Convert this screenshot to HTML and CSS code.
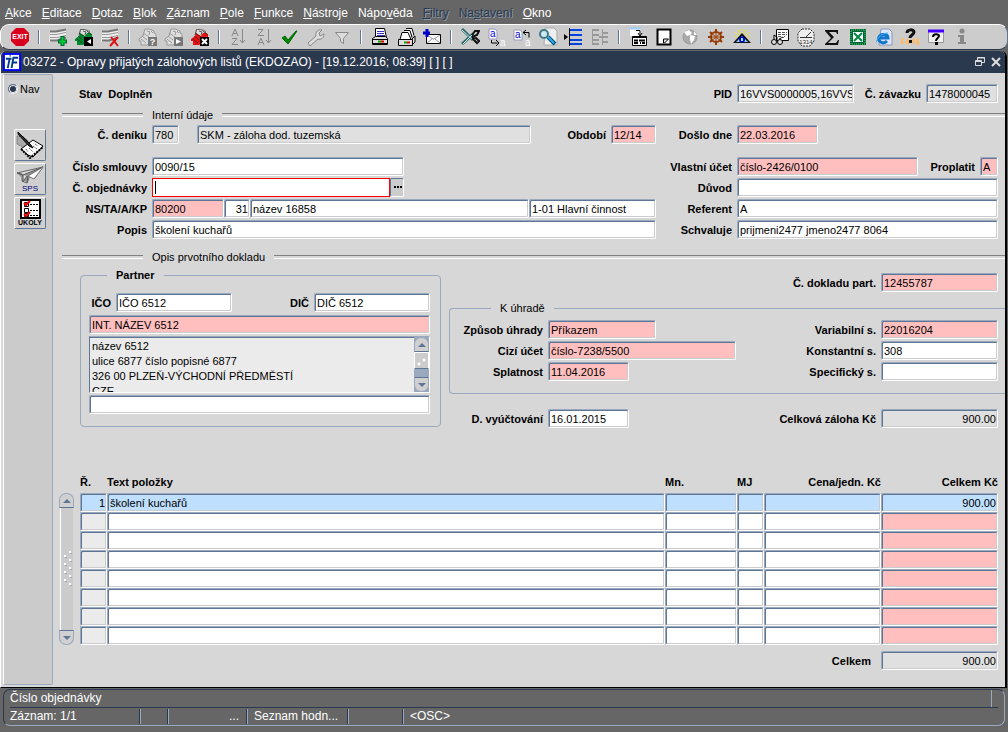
FILE: index.html
```html
<!DOCTYPE html>
<html lang="cs">
  <head>
    <meta charset="UTF-8" />
    <meta name="viewport" content="width=device-width, initial-scale=1.0" />
    <title>03272 - Opravy přijatých zálohových listů</title>
    <link rel="stylesheet" href="styles.css">
  </head>
  <body>
    <svg class="sprite" width="0" height="0" aria-hidden="true">
      <symbol id="rolodex" viewBox="0 0 20 20">
        <path d="M7 2h4l5 2v2l2 1v4l-3 4-6 3H3v-4H1v-2l4-3z" fill="currentColor" />
        <path d="M7 2h4l5 2v2h-3l-2 3-5-3z" fill="#ddd" />
        <path d="M6.500 2.500h4l5 2v2l2 1M4 9l5 4M3 12l5 4M6.500 2.500L5 8M5 6l6 4" stroke="#222" stroke-opacity=".65" fill="none" />
        <path d="M9 4l3 1-1 3M13 4l2 2" stroke="#555" fill="none" />
      </symbol>
      <symbol id="rolodex-off" viewBox="0 0 20 20">
        <path d="M7 2h4l5 2v2l2 1v4l-3 4-6 3H3v-4H1v-2l4-3z" fill="#ddd" stroke="#999" />
        <path d="M4 9l5 4M3 12l5 4M5 6l6 4M9 4l3 1-1 3M13 4l2 2" stroke="#999" fill="none" />
      </symbol>
      <symbol id="rows" viewBox="0 0 20 20">
        <path d="M2 4h7l9-2v10l-6 1-11 2z" fill="#eee" />
        <path d="M2 4.500h6l10-2M2 13.500h7l9-3" stroke="#777" stroke-width="2" fill="none" />
        <path d="M2 7.500h6l10-2M2 10.500h7l9-2" stroke="#999" fill="none" />
      </symbol>
      <symbol id="printer" viewBox="0 0 20 20">
        <path d="M5.500 1.500h9l2 9h-11z" fill="#fff" stroke="#000" />
        <path d="M7 4.500h7M7 6.500h7M7 8.500h8" stroke="#33c" />
        <path d="M2.500 11.500l3-2h10l2 2v6h-15z" fill="#ddd" stroke="#000" />
        <path d="M3 12.500h14M3 16.500h14" stroke="#000" />
        <path d="M8 14.500h3" stroke="#0a0" stroke-width="2" /><path d="M11 14.500h3" stroke="#e00" stroke-width="2" />
      </symbol>
    </svg>

    <nav class="menubar">
      <button type="button"><u>A</u>kce</button>
      <button type="button"><u>E</u>ditace</button>
      <button type="button"><u>D</u>otaz</button>
      <button type="button"><u>B</u>lok</button>
      <button type="button"><u>Z</u>áznam</button>
      <button type="button"><u>P</u>ole</button>
      <button type="button"><u>F</u>unkce</button>
      <button type="button"><u>N</u>ástroje</button>
      <button type="button">Nápo<u>v</u>ěda</button>
      <button type="button" disabled><u>F</u>iltry</button>
      <button type="button" disabled>Na<u>s</u>tavení</button>
      <button type="button"><u>O</u>kno</button>
    </nav>

    <div class="toolbar">
      <button type="button" aria-label="Konec"><svg viewBox="0 0 20 20"><path d="M6 1h8l5 5v8l-5 5H6l-5-5V6z" fill="#d8001c" /><text x="10" y="12" text-anchor="middle" font-size="7" font-weight="bold" fill="#fff">EXIT</text></svg></button>
      <i></i>
      <button type="button" aria-label="Vložit řádek"><svg viewBox="0 0 20 20"><use href="#rows" /><path d="M14.500 9v10M10 14.500h9" stroke="#063" stroke-width="4" /><path d="M14.500 10v8M11 14.500h7" stroke="#0c3" stroke-width="2" /></svg></button>
      <button type="button" aria-label="Uložit"><svg viewBox="0 0 20 20" color="#008a2e"><use href="#rolodex" /><path d="M10 10h9v9h-9z" /><path d="M17 12v5l-4-2.500z" fill="#fff" /></svg></button>
      <button type="button" aria-label="Smazat řádek"><svg viewBox="0 0 20 20"><use href="#rows" /><path d="M11 10l7 9M18 10l-8 9" stroke="#e01010" stroke-width="2" /></svg></button>
      <i></i>
      <button type="button" aria-label="Zadat dotaz"><svg viewBox="0 0 20 20"><use href="#rolodex-off" /><path d="M10 10h9v9h-9z" fill="#777" /><text x="14.500" y="18" text-anchor="middle" font-size="9" font-weight="bold" fill="#fff">?</text></svg></button>
      <button type="button" aria-label="Provést dotaz"><svg viewBox="0 0 20 20"><use href="#rolodex-off" /><path d="M10 10h9v9h-9z" fill="#777" /><path d="M12 12v5l5-2.500z" fill="#fff" /></svg></button>
      <button type="button" aria-label="Zrušit dotaz"><svg viewBox="0 0 20 20" color="#e81010"><use href="#rolodex" /><path d="M10 10h9v9h-9z" /><path d="M12 12l5 5M17 12l-5 5" stroke="#fff" stroke-width="2" /></svg></button>
      <i></i>
      <button type="button" aria-label="Třídit vzestupně"><svg viewBox="0 0 20 20" fill="none" stroke="#888"><path d="M4 9l3-7 3 7M5 6.500h4M4 11.500h5l-5 6h6M14.500 2v14M12 13l2.500 3 2.500-3" /></svg></button>
      <button type="button" aria-label="Třídit sestupně"><svg viewBox="0 0 20 20" fill="none" stroke="#888"><path d="M4 2.500h5l-5 6h6M4 18l3-7 3 7M5 15.500h4M14.500 2v14M12 13l2.500 3 2.500-3" /></svg></button>
      <button type="button" aria-label="Potvrdit"><svg viewBox="0 0 20 20"><path d="M2 11l3-2 3 4 8-9h1l-9 13z" fill="#080" stroke="#060" /></svg></button>
      <button type="button" aria-label="Nástroj"><svg viewBox="0 0 20 20"><path d="M2 16l8-7c-1-4 2-7 6-6l-3 3 1 3 4-2c0 4-3 6-6 5l-8 7z" fill="#ddd" stroke="#888" /></svg></button>
      <button type="button" aria-label="Filtr"><svg viewBox="0 0 20 20"><path d="M3.500 5.500h13l-5 6v5l-3-2v-3z" fill="#ddd" stroke="#888" /></svg></button>
      <i></i>
      <button type="button" aria-label="Tisk"><svg viewBox="0 0 20 20"><use href="#printer" /></svg></button>
      <button type="button" aria-label="Hromadný tisk"><svg viewBox="0 0 20 20"><path d="M10 1.500h6l2 7M8 3.500h6l2 7M6 5.500h6l3 7H4z" fill="#fff" stroke="#000" /><path d="M2.500 12.500h14v6h-14zM16 12l3-3v6l-3 3" fill="#ddd" stroke="#000" /><path d="M8 15.500h3" stroke="#0a0" stroke-width="2" /><path d="M11 15.500h3" stroke="#e00" stroke-width="2" /></svg></button>
      <button type="button" aria-label="Odeslat poštou"><svg viewBox="0 0 20 20"><path d="M4.500 7.500h14v9h-14z" fill="#fff" stroke="#000" /><path d="M5 8l6 4h1l6-4M5 16l5-4M18 16l-5-4" stroke="#999" fill="none" /><path d="M5 2v8M1 6h7" stroke="#00c" stroke-width="3" /></svg></button>
      <i></i>
      <button type="button" aria-label="Vyjmout"><svg viewBox="0 0 20 20" fill="none"><path d="M2 2l11 11M2 17L13 7" stroke="#366" stroke-width="3" /><path d="M2 3l11 10M3 17L13 7" stroke="#bee" /><path d="M12 8l3-4 4 0-2 4-5 2M12 12l4-1 3 3-2 2-4-4" stroke="#111" stroke-width="2" /></svg></button>
      <button type="button" aria-label="Kopírovat"><svg viewBox="0 0 20 20"><path d="M3 2h6l2 2v8H3z" fill="#fff" stroke="#99b" /><text x="4" y="10" font-size="10" fill="#00e">a</text><path d="M5.500 13v3h6M10 13l3 3-3 3" stroke="#000" fill="none" /><text x="14" y="19" font-size="10" fill="#fff">a</text></svg></button>
      <button type="button" aria-label="Vložit"><svg viewBox="0 0 20 20"><path d="M2 3h6l2 2v8H2z" fill="#fff" stroke="#99b" /><text x="3" y="11" font-size="10" fill="#00c">a</text><path d="M11 5.500h6v5M14 3l-3 2.500L14 8" stroke="#000" fill="none" /><text x="13" y="19" font-size="10" fill="#fff">a</text></svg></button>
      <button type="button" aria-label="Hledat"><svg viewBox="0 0 20 20"><path d="M7 1h9l3 3v14H6z" fill="#eee" stroke="#aaa" /><path d="M10 10l7 7" stroke="#058" stroke-width="4" /><path d="M10 10l6 6" stroke="#3ad" stroke-width="2" /><circle cx="6" cy="7" r="4" fill="#cee8f4" stroke="#478" stroke-width="2" /></svg></button>
      <button type="button" aria-label="Seznam"><svg viewBox="0 0 20 20"><path d="M0 7v6l4-3z" /><path d="M5.500 1v18" stroke="#000" /><path d="M6 3h12M6 8h12M6 13h12M6 17h12" stroke="#04d" stroke-width="2" /></svg></button>
      <button type="button" aria-label="Strom" disabled><svg viewBox="0 0 20 20"><path d="M2.500 2v16M12.500 2v16" stroke="#999" /><path d="M3 3h6M3 8h6M3 13h6M3 17h6M9 10h9M13 6h5M13 15h5" stroke="#999" stroke-width="2" fill="none" /></svg></button>
      <i></i>
      <button type="button" aria-label="Kalendář"><svg viewBox="0 0 20 20"><path d="M2 1h11v8H2z" fill="#fff" /><path d="M2 1.500h11" stroke="#9cf" stroke-width="2" /><path d="M8 3.500h4v5M10 6l2 3 2-3" stroke="#000" fill="none" /><path d="M4.500 9.500h14v9h-14z" fill="#fff" stroke="#000" /><path d="M5 10h13" stroke="#000" stroke-width="2" /><path d="M6 13.500h4M11 13.500h6M6 16h4M12 16h1M14 16h3" stroke="#000" stroke-width="2" /></svg></button>
      <button type="button" aria-label="Poznámka"><svg viewBox="0 0 20 20"><path d="M3.500 2.500h13v15h-13z" fill="#fff" stroke="#000" stroke-width="2" /><path d="M9.500 16v-4h5l-4 4z" fill="#ddd" stroke="#000" /></svg></button>
      <button type="button" aria-label="Web"><svg viewBox="0 0 20 20"><circle cx="10" cy="10" r="7" fill="#aaa" stroke="#999" /><path d="M4 5l5-2 3 3-2 2-3 1zM10 8l5 1-1 4-3 4-1-5zM14 4l3 4h-3z" fill="#fff" /></svg></button>
      <button type="button" aria-label="Kormidlo"><svg viewBox="0 0 20 20" fill="none" stroke="#963a04"><path d="M10 2v16M2 10h16M4 5l12 10M16 5L4 15" /><path d="M10 2v3M10 15v3M2 10h3M15 10h3M4 5l2 2M16 15l-2-2M16 5l-2 2M4 15l2-2" stroke-width="2" /><circle cx="10" cy="10" r="5" stroke-width="2" /><circle cx="10" cy="10" r="1" fill="#ec9" /></svg></button>
      <button type="button" aria-label="Náhled"><svg viewBox="0 0 20 20"><path d="M3 5l4 4M17 5l-4 4M10 2v4M6 3l2 4M14 3l-2 4M2 9l3 2M18 9l-3 2" stroke="#ee0" stroke-dasharray="2 1" /><path d="M1 16l9-10 9 10z" fill="#111" /><path d="M4 15l6-6 6 6z" fill="#8cf" /><circle cx="10" cy="12.500" r="3" fill="#00c" /><path d="M9 11h2v3H9z" fill="#6ff" /></svg></button>
      <i></i>
      <button type="button" aria-label="Prohlížet"><svg viewBox="0 0 20 20"><path d="M6.500 2.500h12v11h-12z" fill="#fff" stroke="#000" /><path d="M8 5.500h9M8 7.500h7M8 9.500h4M13 11l4-4" stroke="#555" stroke-dasharray="3 1" /><path d="M4 13V8l3 2v4M9 12l4-2" fill="none" stroke="#000" /><circle cx="4" cy="15" r="2.500" fill="#ddd" stroke="#000" /><circle cx="10" cy="15" r="2.500" fill="#ddd" stroke="#000" /></svg></button>
      <button type="button" aria-label="Čas"><svg viewBox="0 0 20 20"><path d="M6 2h8l4 4v8l-4 5H6l-4-5V6z" fill="#eee" stroke="#333" stroke-dasharray="2 1" /><path d="M10 10l5-5M4 10.500h12" stroke="#333" /><text x="10" y="17" text-anchor="middle" font-size="6" fill="#333">1314</text></svg></button>
      <button type="button" aria-label="Součet"><svg viewBox="0 0 20 20"><path d="M3 3h13v4h-1l-1-2H7l5 5-6 6h8l2-3h1l-1 5H3v-1l6-6-6-7z" fill="#111" /></svg></button>
      <button type="button" aria-label="Excel"><svg viewBox="0 0 20 20"><path d="M3.500 3.500h13v13h-13z" fill="#fff" stroke="#063" stroke-width="3" /><path d="M3 3h14v14H3z" fill="none" stroke="#5c7" stroke-dasharray="1 1" /><path d="M6 6l8 8M14 6l-8 8" stroke="#084" stroke-width="2" /></svg></button>
      <button type="button" aria-label="Prohlížeč"><svg viewBox="0 0 20 20"><path d="M7 2h8l3 3v13H5z" fill="#dde6fb" stroke="#89b" /><path d="M13 14c-4 4-10 0-8-4 2-4 9-3 9 1H6" fill="none" stroke="#17c" stroke-width="3" /><path d="M3 15c-2 1 2-9 11-9" fill="none" stroke="#4af" /></svg></button>
      <button type="button" aria-label="Uživatelé"><svg viewBox="0 0 20 20"><path d="M1 11h3l-1 3 2 3H1zM6 12h3v5l-2 1-1-3zM12 12h3v3l-2 3zM17 11h2v7h-3z" fill="#fb6" /><path d="M7 6c0-4 7-4 7-1 0 3-4 3-4 6" fill="none" stroke="#111" stroke-width="3" /><path d="M9 13h3v3H9z" fill="#111" /></svg></button>
      <button type="button" aria-label="Nápověda"><svg viewBox="0 0 20 20"><path d="M2.500 3.500h15v12h-15z" fill="#eee" stroke="#999" /><path d="M2 4h16" stroke="#40f" stroke-width="3" /><path d="M7 10c0-4 6-3 6-1 0 2-3 2-3 5" fill="none" stroke="#000" stroke-width="2" /><path d="M9 15h3v3H9z" /></svg></button>
      <button type="button" aria-label="Informace" disabled><svg viewBox="0 0 20 20"><circle cx="10" cy="4" r="2.500" fill="#888" /><path d="M6 8h6v7h2v2H6v-2h2v-5H6z" fill="#888" /></svg></button>
    </div>

    <div class="window">
      <header class="titlebar">
        <svg class="logo" viewBox="0 0 19 19"><path d="M0 0h19v19H0z" fill="#00f" /><path d="M2 2h15v15H2z" fill="#fff" /><path d="M3 6h6M7 6L5 16M16 5h-5L9 16M10 10h5M7 3h1" stroke="#003a8c" stroke-width="2" fill="none" /></svg>
        <h1>03272 - Opravy přijatých zálohových listů (EKDOZAO) - [19.12.2016; 08:39] [ ] [ ]</h1>
        <button type="button" aria-label="Obnovit"><svg viewBox="0 0 12 12" fill="none" stroke="#ddd"><path d="M3.500 4V1.500h7v5H8" /><path d="M1.500 4.500h6v5h-6zM1 5.500h7M3 2h8" /></svg></button>
        <button type="button" aria-label="Zavřít"><svg viewBox="0 0 12 12" fill="none" stroke="#ddd" stroke-width="2"><path d="M2 2l8 8M10 2l-8 8" /></svg></button>
      </header>

      <div class="workspace">
        <aside class="sidebar">
          <label class="nav-switch"><input type="radio" name="nav" checked />Nav</label>
          <button type="button" aria-label="Zápis"><svg viewBox="0 0 28 28"><path d="M1 5l7 1 6 6-5 5-8-4z" fill="#aaa" stroke="#555" stroke-dasharray="1 1" /><path d="M5 18l12-9 10 6-10 11-5-2z" fill="#fff" stroke="#000" /><path d="M5 18l9 9 13-11" fill="none" stroke="#000" stroke-width="2" stroke-dasharray="2 1" /><path d="M10 18l2 3M13 17l4 4M17 15l4 3M19 13l3 2" stroke="#666" stroke-dasharray="2 1" /><path d="M2 1l13 13 2 3-4-2L2 3z" fill="#333" stroke="#000" /></svg></button>
          <button type="button" aria-label="SPS"><svg viewBox="0 0 28 28"><path d="M1 8L27 2 18 14l-4-4-3 8-5-2V9z" fill="#ddd" stroke="#666" /><path d="M1 8l6 2L27 2 12 11l-1 7M7 10v7l4-6" fill="#999" stroke="#555" /><path d="M12 11l6 3 9-12z" fill="#fff" stroke="#777" /><text x="14" y="26" text-anchor="middle" font-size="8" fill="#007">SPS</text></svg></button>
          <button type="button" aria-label="Úkoly"><svg viewBox="0 0 28 28"><path d="M5 1h19v18H5z" fill="#fff" stroke="#000" stroke-width="2" /><path d="M8.500 3.500h4v4h-4zM8.500 9.500h4v4h-4zM8.500 14.500h4v3h-4z" fill="#fff" stroke="#000" /><path d="M8 4l2 2 4-4M8 15l2 2 4-4" stroke="#e00" stroke-width="2" fill="none" /><path d="M14 5.500h8M14 11.500h8M14 16.500h8" stroke="#000" stroke-dasharray="2 1" /><text x="14" y="26" text-anchor="middle" font-size="7" font-weight="bold">ÚKOLY</text></svg></button>
        </aside>

        <form class="form">
          <div class="form-row form-row-status">
            <span class="state"><b>Stav</b><b>Doplněn</b></span>
            <label for="pid">PID</label>
            <input type="text" id="pid" class="soft" value="16VVS0000005,16VVS0000006" />
            <label for="zavazek">Č. závazku</label>
            <input type="text" id="zavazek" class="readonly" value="1478000045" readonly />
          </div>

          <h2 class="rule">Interní údaje</h2>

          <div class="fields fields-top">
            <label for="denik">Č. deníku</label>
            <div class="group">
              <input type="text" id="denik" class="readonly w-27" value="780" readonly />
              <input type="text" class="readonly denik-name" aria-label="Název deníku" value="SKM - záloha dod. tuzemská" readonly />
              <label for="obdobi">Období</label>
              <input type="text" id="obdobi" class="required w-45" value="12/14" />
            </div>
            <label for="doslo">Došlo dne</label>
            <div class="group"><input type="text" id="doslo" class="required w-81" value="22.03.2016" /></div>
          </div>

          <div class="fields">
            <label for="smlouva">Číslo smlouvy</label>
            <div class="group"><input type="text" id="smlouva" class="half" value="0090/15" /></div>
            <label for="ucet">Vlastní účet</label>
            <div class="group">
              <input type="text" id="ucet" class="required grow" value="číslo-2426/0100" />
              <label for="proplatit" class="label-proplatit">Proplatit</label>
              <input type="text" id="proplatit" class="required w-18" value="A" />
            </div>

            <label for="objednavka">Č. objednávky</label>
            <div class="group">
              <div class="half lov">
                <input type="text" id="objednavka" class="active" />
                <button type="button" aria-label="Seznam hodnot"><svg viewBox="0 0 9 2"><path d="M0 0h2v2H0zM3 0h2v2H3zM6 0h2v2H6z" /></svg></button>
              </div>
            </div>
            <label for="duvod">Důvod</label>
            <input type="text" id="duvod" />

            <label for="ns">NS/TA/A/KP</label>
            <div class="group ns">
              <input type="text" id="ns" class="required" value="80200" />
              <input type="text" class="number" aria-label="TA" value="31" />
              <input type="text" aria-label="Název akce" value="název 16858" />
              <input type="text" aria-label="KP" value="1-01 Hlavní činnost" />
            </div>
            <label for="referent">Referent</label>
            <input type="text" id="referent" value="A" />

            <label for="popis">Popis</label>
            <input type="text" id="popis" value="školení kuchařů" />
            <label for="schvaluje">Schvaluje</label>
            <input type="text" id="schvaluje" value="prijmeni2477 jmeno2477 8064" />
          </div>

          <h2 class="rule rule-second">Opis prvotního dokladu</h2>

          <div class="document">
            <fieldset class="partner">
              <legend>Partner</legend>
              <div class="partner-ids">
                <label for="ico">IČO</label>
                <input type="text" id="ico" value="IČO 6512" />
                <label for="dic">DIČ</label>
                <input type="text" id="dic" value="DIČ 6512" />
              </div>
              <input type="text" class="required" aria-label="Interní název" value="INT. NÁZEV 6512" />
              <div class="address">
                <textarea aria-label="Adresa" readonly>název 6512
ulice 6877 číslo popisné 6877
326 00 PLZEŇ-VÝCHODNÍ PŘEDMĚSTÍ
CZE</textarea>
                <div class="scrollbar scrollbar-dark">
                  <button type="button" class="up" aria-label="Nahoru"></button>
                  <span class="thumb"></span>
                  <button type="button" class="down" aria-label="Dolů"></button>
                </div>
              </div>
              <input type="text" aria-label="Poznámka k partnerovi" />
            </fieldset>

            <div class="payment">
              <div class="pay-fields">
                <label for="doklad" class="right-label">Č. dokladu part.</label>
                <input type="text" id="doklad" class="required" value="12455787" />
              </div>
              <fieldset class="pay">
                <legend>K úhradě</legend>
                <div class="pay-fields">
                  <label for="zpusob">Způsob úhrady</label>
                  <div class="group"><input type="text" id="zpusob" class="required w-108" value="Příkazem" /></div>
                  <label for="vs">Variabilní s.</label>
                  <input type="text" id="vs" class="required" value="22016204" />

                  <label for="cizi">Cizí účet</label>
                  <input type="text" id="cizi" class="required" value="číslo-7238/5500" />
                  <label for="ks">Konstantní s.</label>
                  <input type="text" id="ks" value="308" />

                  <label for="splatnost">Splatnost</label>
                  <div class="group"><input type="text" id="splatnost" class="required w-81" value="11.04.2016" /></div>
                  <label for="ss">Specifický s.</label>
                  <input type="text" id="ss" />
                </div>
              </fieldset>
              <div class="pay-fields">
                <label for="vyuctovani">D. vyúčtování</label>
                <div class="group"><input type="text" id="vyuctovani" class="w-81" value="16.01.2015" /></div>
                <label for="zaloha">Celková záloha Kč</label>
                <input type="text" id="zaloha" class="readonly number" value="900.00" readonly />
              </div>
            </div>
          </div>

          <div class="items">
            <div class="scrollbar">
              <button type="button" class="up" aria-label="Předchozí záznam"></button>
              <span class="track"><svg viewBox="0 0 9 36"><path d="M6 1h2M1 5h2M6 9h2M1 13h2M6 17h2M1 21h2M6 25h2M1 29h2M6 33h2" stroke="#fff" stroke-width="2" /><path d="M7 2.500h2M2 6.500h2M7 10.500h2M2 14.500h2M7 18.500h2M2 22.500h2M7 26.500h2M2 30.500h2M7 34.500h2" stroke="#9aa9be" /></svg></span>
              <button type="button" class="down" aria-label="Další záznam"></button>
            </div>
            <table>
              <colgroup>
                <col class="col-no" /><col /><col class="col-qty" /><col class="col-unit" /><col class="col-price" /><col class="col-price" />
              </colgroup>
              <thead>
                <tr><th>Ř.</th><th>Text položky</th><th>Mn.</th><th>MJ</th><th class="number">Cena/jedn. Kč</th><th class="number">Celkem Kč</th></tr>
              </thead>
              <tbody>
                <tr class="current">
                  <td><input type="text" aria-label="Ř." class="number" value="1" /></td>
                  <td><input type="text" aria-label="Text položky" value="školení kuchařů" /></td>
                  <td><input type="text" aria-label="Mn." /></td>
                  <td><input type="text" aria-label="MJ" /></td>
                  <td><input type="text" aria-label="Cena/jedn. Kč" /></td>
                  <td><input type="text" aria-label="Celkem Kč" class="number" value="900.00" /></td>
                </tr>
                <tr>
                  <td><input type="text" aria-label="Ř." class="soft" /></td>
                  <td><input type="text" aria-label="Text položky" /></td>
                  <td><input type="text" aria-label="Mn." /></td>
                  <td><input type="text" aria-label="MJ" /></td>
                  <td><input type="text" aria-label="Cena/jedn. Kč" /></td>
                  <td><input type="text" aria-label="Celkem Kč" class="required" /></td>
                </tr>
                <tr>
                  <td><input type="text" aria-label="Ř." class="soft" /></td>
                  <td><input type="text" aria-label="Text položky" /></td>
                  <td><input type="text" aria-label="Mn." /></td>
                  <td><input type="text" aria-label="MJ" /></td>
                  <td><input type="text" aria-label="Cena/jedn. Kč" /></td>
                  <td><input type="text" aria-label="Celkem Kč" class="required" /></td>
                </tr>
                <tr>
                  <td><input type="text" aria-label="Ř." class="soft" /></td>
                  <td><input type="text" aria-label="Text položky" /></td>
                  <td><input type="text" aria-label="Mn." /></td>
                  <td><input type="text" aria-label="MJ" /></td>
                  <td><input type="text" aria-label="Cena/jedn. Kč" /></td>
                  <td><input type="text" aria-label="Celkem Kč" class="required" /></td>
                </tr>
                <tr>
                  <td><input type="text" aria-label="Ř." class="soft" /></td>
                  <td><input type="text" aria-label="Text položky" /></td>
                  <td><input type="text" aria-label="Mn." /></td>
                  <td><input type="text" aria-label="MJ" /></td>
                  <td><input type="text" aria-label="Cena/jedn. Kč" /></td>
                  <td><input type="text" aria-label="Celkem Kč" class="required" /></td>
                </tr>
                <tr>
                  <td><input type="text" aria-label="Ř." class="soft" /></td>
                  <td><input type="text" aria-label="Text položky" /></td>
                  <td><input type="text" aria-label="Mn." /></td>
                  <td><input type="text" aria-label="MJ" /></td>
                  <td><input type="text" aria-label="Cena/jedn. Kč" /></td>
                  <td><input type="text" aria-label="Celkem Kč" class="required" /></td>
                </tr>
                <tr>
                  <td><input type="text" aria-label="Ř." class="soft" /></td>
                  <td><input type="text" aria-label="Text položky" /></td>
                  <td><input type="text" aria-label="Mn." /></td>
                  <td><input type="text" aria-label="MJ" /></td>
                  <td><input type="text" aria-label="Cena/jedn. Kč" /></td>
                  <td><input type="text" aria-label="Celkem Kč" class="required" /></td>
                </tr>
                <tr>
                  <td><input type="text" aria-label="Ř." class="soft" /></td>
                  <td><input type="text" aria-label="Text položky" /></td>
                  <td><input type="text" aria-label="Mn." /></td>
                  <td><input type="text" aria-label="MJ" /></td>
                  <td><input type="text" aria-label="Cena/jedn. Kč" /></td>
                  <td><input type="text" aria-label="Celkem Kč" class="required" /></td>
                </tr>
              </tbody>
            </table>
          </div>

          <div class="total">
            <label for="celkem">Celkem</label>
            <input type="text" id="celkem" class="readonly number" value="900.00" readonly />
          </div>
        </form>
      </div>
    </div>

    <footer class="statusbar">
      <div class="hint">Číslo objednávky</div>
      <div class="cells">
        <span class="cell cell-record">Záznam: 1/1</span>
        <span class="cell cell-small"></span>
        <span class="cell cell-dots">...</span>
        <span class="cell cell-list">Seznam hodn...</span>
        <span class="cell cell-blank"></span>
        <span class="cell">&lt;OSC&gt;</span>
      </div>
    </footer>
  </body>
</html>
```

FILE: styles.css
```css
* {
  box-sizing: border-box;
}

body {
  margin: 0;
  min-height: 100vh;
  display: flex;
  flex-direction: column;
  background-color: #666;
  color: #000;
  font-family: 'Liberation Sans', Arial, sans-serif;
  font-size: 11px;
}

button,
input,
textarea {
  margin: 0;
  font: inherit;
  color: inherit;
}

button {
  padding: 0;
  border: 0;
  background: none;
}

svg {
  display: block;
}

.sprite {
  position: absolute;
}

/* menu */
.menubar {
  display: flex;
  gap: 10px;
  height: 24px;
  padding: 2px 5px 0;
  font-size: 12px;
  color: #fff;
}

.menubar button:disabled {
  color: #2b394f;
  text-shadow: 1px 1px 0 #8b98aa;
}

/* toolbar */
.toolbar {
  display: flex;
  align-items: center;
  height: 26px;
  padding-left: 6px;
  border: 1px solid #fff;
  border-bottom-color: #2b394f;
  border-right-color: #5f7595;
  border-radius: 9px;
  background-color: #ccc;
}

.toolbar button {
  width: 26px;
  padding: 0 3px;
}

.toolbar svg {
  width: 20px;
  height: 20px;
}

.toolbar i {
  width: 2px;
  height: 14px;
  margin: 0 5px;
  border-left: 1px solid #5f7595;
  border-right: 1px solid #fff;
}

/* window */
.window {
  flex: 1;
  display: flex;
  flex-direction: column;
  margin: 1px 1px 0 0;
  border-left: 1px solid #fff;
  border-right: 2px solid #000;
  border-bottom: 1px solid #000;
  border-radius: 6px 6px 0 0;
  background-color: #d7d7d7;
}

.titlebar {
  display: flex;
  align-items: center;
  gap: 2px;
  height: 22px;
  padding: 0 3px 0 2px;
  border-radius: 5px 5px 0 0;
  background-color: #2b394f;
  color: #fff;
}

.titlebar h1 {
  flex: 1;
  margin: 0;
  font-size: 12px;
  font-weight: normal;
}

.logo {
  width: 18px;
  height: 18px;
}

.titlebar button {
  margin-left: 2px;
}

.titlebar button svg {
  width: 12px;
  height: 12px;
}

.workspace {
  flex: 1;
  display: flex;
  padding-left: 2px;
}

.sidebar {
  display: flex;
  flex-direction: column;
  align-items: center;
  gap: 2px;
  width: 50px;
  margin: 1px 0 2px;
  padding-left: 4px;
  border: 1px solid #9aa9be;
  border-left-color: #fff;
  border-radius: 2px;
  background-color: #cbcbcb;
}

.sidebar button {
  width: 32px;
  height: 32px;
  padding: 1px;
  border: 1px solid #fff;
  border-right-color: #5f7595;
  border-bottom-color: #5f7595;
  border-radius: 2px;
  background-color: #d0d0d0;
}

.sidebar svg {
  width: 28px;
  height: 28px;
}

.nav-switch {
  display: flex;
  align-items: center;
  gap: 2px;
  align-self: flex-start;
  height: 18px;
  margin: 5px 0 29px;
  background-color: #d0d0d0;
  font-weight: normal;
}

.nav-switch input {
  appearance: none;
  width: 10px;
  height: 10px;
  border: 1px solid #5f7595;
  border-right-color: #fff;
  border-bottom-color: #fff;
  border-radius: 50%;
  background-color: #2b394f;
  box-shadow: inset 0 0 0 1px #eee;
}

/* fields */
label {
  font-weight: bold;
  text-align: right;
  white-space: nowrap;
}

.form {
  flex: 1;
  min-width: 0;
  padding-top: 11px;
}

input[type='text'],
textarea {
  width: 100%;
  min-width: 0;
  height: 19px;
  padding: 1px 1px 0 2px;
  border: 1px solid #fff;
  border-top-color: #9aa9be;
  border-left-color: #9aa9be;
  border-radius: 2px;
  outline: 0;
  background-color: #fff;
  box-shadow: inset 1px 1px 0 #5f7595, inset -1px -1px 0 #ccc;
}

input[type='text'].required {
  background-color: #ffbfbf;
}

input[type='text'].readonly {
  background-color: #e0e0e0;
}

input[type='text'].soft {
  background-color: #ebebeb;
}

.number {
  text-align: right;
}

/* caret and red frame of the focused item */
input[type='text'].active {
  border: 1px solid #f00;
  border-radius: 0;
  background: linear-gradient(#000, #000) 2px 2px / 1px 13px no-repeat #fff;
  box-shadow: none;
}

.form-row-status {
  display: grid;
  grid-template-columns: minmax(0, 1fr) 60px 117px 62px 72px;
  column-gap: 5px;
  align-items: center;
  padding: 0 7px 0 26px;
}

.state {
  display: flex;
  gap: 6px;
}

.rule {
  display: flex;
  align-items: center;
  gap: 9px;
  height: 16px;
  margin: 4px 0 2px 9px;
  font-size: 11px;
  font-weight: normal;
}

.rule::before,
.rule::after {
  content: '';
  width: 81px;
  height: 2px;
  border-top: 1px solid #808080;
  border-bottom: 1px solid #fff;
}

.rule::after {
  flex: 1;
}

.rule-second {
  margin-top: 10px;
  margin-bottom: 0;
}

.fields {
  display: grid;
  grid-template-columns: 85px minmax(0, 504fr) 71px minmax(0, 261fr);
  gap: 2px 5px;
  align-items: center;
  padding: 0 7px 0 9px;
}

.fields-top {
  margin-bottom: 13px;
}

.group {
  display: flex;
  align-items: center;
  min-width: 0;
}

.group .grow {
  flex: 1;
}

.group .denik-name {
  flex: 1;
  margin: 0 37px 0 18px;
}

.group label + input {
  margin-left: 5px;
}

.group .w-18 {
  width: 18px;
}

.group .w-27 {
  width: 27px;
}

.group .w-45 {
  width: 45px;
}

.group .w-81 {
  width: 81px;
}

.group .w-108 {
  width: 108px;
}

.group .half {
  width: 50%;
}

.label-proplatit {
  margin-left: 12px;
}

.lov {
  display: flex;
}

.lov button {
  display: flex;
  align-items: center;
  flex: none;
  width: 14px;
  height: 19px;
  padding: 0 0 2px 3px;
  border: 1px solid #fff;
  border-top-color: #5f7595;
  border-left-color: #5f7595;
  border-radius: 2px;
  background-color: #ccc;
}

.lov svg {
  width: 9px;
  height: 2px;
}

.ns {
  display: grid;
  grid-template-columns: 72fr 26fr 279fr 127fr;
}

/* document */
.document {
  display: grid;
  grid-template-columns: minmax(0, 361fr) minmax(0, 556fr);
  gap: 8px;
  align-items: start;
  padding-left: 27px;
}

fieldset {
  min-width: 0;
  margin: 0;
  padding: 0;
  border: 1px solid #9aa9be;
  border-radius: 4px;
}

legend {
  height: 16px;
  padding: 0 9px;
  line-height: 16px;
}

.partner {
  display: flex;
  flex-direction: column;
  gap: 2px;
  margin-top: 2px;
  padding: 10px 10px 12px 8px;
}

.partner legend {
  margin-left: 18px;
  font-weight: bold;
}

.partner-ids {
  display: grid;
  grid-template-columns: 22px minmax(0, 1fr) 72px minmax(0, 1fr);
  column-gap: 5px;
  align-items: center;
  margin-bottom: 1px;
}

.address {
  display: flex;
  height: 57px;
  border: 1px solid #fff;
  border-top-color: #9aa9be;
  border-left-color: #5f7595;
  background-color: #ebebeb;
}

.address textarea {
  flex: 1;
  height: 55px;
  padding: 1px 1px 0 2px;
  border: 0;
  border-top: 1px solid #5f7595;
  border-radius: 0;
  background: none;
  box-shadow: none;
  line-height: 15px;
  overflow: hidden;
  resize: none;
}

.scrollbar {
  display: flex;
  flex-direction: column;
  flex: none;
  width: 15px;
}

.scrollbar button {
  display: flex;
  align-items: center;
  justify-content: center;
  height: 15px;
  border: 1px solid #9aa9be;
  background-color: #d0d0d0;
}

.scrollbar .up {
  border-bottom-color: #5f7595;
  border-radius: 7px 7px 0 0;
}

.scrollbar .down {
  border-top-color: #5f7595;
  border-radius: 0 0 7px 7px;
}

.scrollbar .up::before,
.scrollbar .down::before {
  content: '';
  border: 4px solid transparent;
  border-top-width: 0;
  border-bottom-color: #5f7595;
}

.scrollbar .down::before {
  border-top: 4px solid #5f7595;
  border-bottom-width: 0;
}

.scrollbar-dark {
  background-color: #9aa9be;
}

.scrollbar-dark .down {
  margin-top: auto;
}

.thumb {
  height: 17px;
  border: 1px solid #fff;
  border-bottom-color: #5f7595;
  background: radial-gradient(circle at 4px 11px, #fff 1px, transparent 2px),
    radial-gradient(circle at 9px 7px, #fff 1px, transparent 2px), #ccc;
}

.track {
  flex: 1;
  display: flex;
  align-items: center;
  justify-content: center;
  margin: 0 1px;
  border-left: 1px solid #fff;
  background-color: #cbcbcb;
}

.track svg {
  width: 9px;
  height: 36px;
}

.payment {
  padding-top: 8px;
}

.pay-fields {
  display: grid;
  grid-template-columns: 93px minmax(0, 188fr) 135px minmax(0, 117fr);
  gap: 2px 5px;
  align-items: center;
  padding: 0 7px 0 1px;
}

.right-label {
  grid-column: 3;
}

.pay {
  margin: 8px 0 15px;
  padding: 4px 0 12px;
  border-right: 0;
  border-radius: 4px 0 0 4px;
}

.pay legend {
  margin-left: 41px;
}

.pay .pay-fields {
  padding-left: 0;
}

/* items */
.items {
  display: flex;
  align-items: flex-end;
  gap: 6px;
  margin-top: 45px;
  padding: 0 7px 0 6px;
}

.items .scrollbar {
  height: 152px;
}

.items table {
  flex: 1;
  table-layout: fixed;
  width: 100%;
  border-collapse: collapse;
}

.items th {
  height: 20px;
  padding: 0 0 2px;
  text-align: left;
}

.items th.number {
  text-align: right;
}

.items td {
  height: 19px;
  padding: 0;
}

.items td input {
  display: block;
}

.items .current input {
  background-color: #bfdfff;
}

.col-no,
.col-unit {
  width: 27px;
}

.col-qty {
  width: 72px;
}

.col-price {
  width: 117px;
}

.total {
  display: flex;
  align-items: center;
  justify-content: flex-end;
  gap: 10px;
  margin-top: 6px;
  padding-right: 7px;
}

.total input[type='text'] {
  width: 117px;
}

/* status bar */
.statusbar {
  margin: 1px 3px 6px;
  padding: 0 6px;
  border: 1px solid #2b394f;
  border-bottom-color: #9aa9be;
  border-right-color: #9aa9be;
  border-radius: 7px;
  color: #fff;
  font-size: 12px;
  line-height: 17px;
}

.hint {
  margin-right: 6px;
  border-right: 1px solid #9aa9be;
}

.cells {
  display: flex;
  border-top: 1px solid #2b394f;
}

.cell {
  height: 15px;
  margin: 1px 0;
  padding: 0 7px;
  line-height: 15px;
  white-space: nowrap;
}

.cell + .cell {
  border-left: 1px solid #2b394f;
  box-shadow: inset 1px 0 0 #9aa9be;
}

.cell-record {
  width: 129px;
  padding-left: 0;
}

.cell-small {
  width: 28px;
}

.cell-dots {
  width: 79px;
  text-align: right;
}

.cell-list {
  width: 101px;
}

.cell-blank {
  width: 55px;
}
```
